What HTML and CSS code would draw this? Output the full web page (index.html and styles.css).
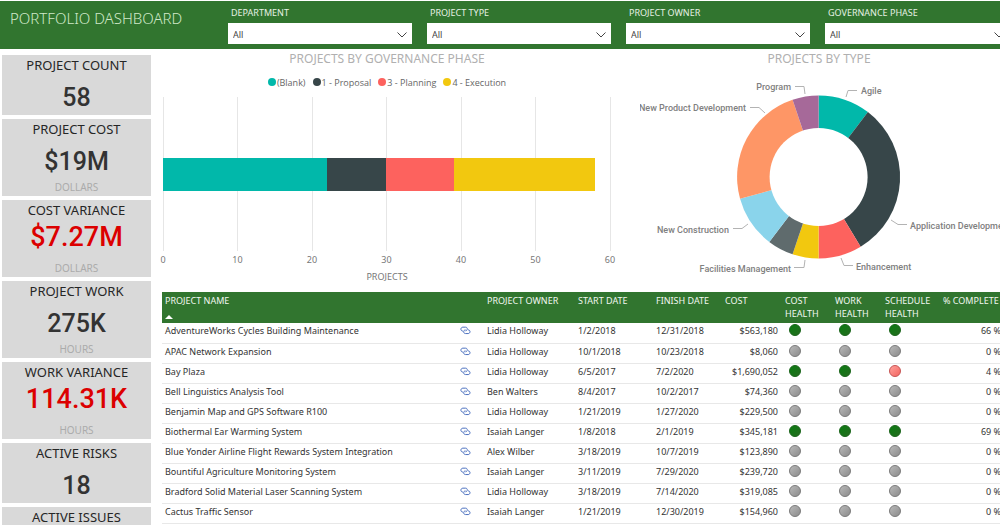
FILE: index.html
```html
<!DOCTYPE html>
<html lang="en">
<head>
<meta charset="utf-8">
<title>Portfolio Dashboard</title>
<link rel="stylesheet" href="styles.css">
</head>
<body>
<svg class="defs" aria-hidden="true">
  <symbol id="link" viewBox="0 0 12 10">
    <g fill="none" stroke="#4a6fbe" stroke-width="1.1">
      <path d="M3.3 5.7C1.6 5.7.9 4.6.9 3.5S1.7 1.3 3.1 1.3H6C7.4 1.3 8 2.2 8 3.2S7.3 5.4 6 5.4"/>
      <path d="M8.8 4.3C10.4 4.3 11 5.300 11 6.300S10.300 8.400 9 8.400H6C4.600 8.400 4 7.500 4 6.400S4.700 4.300 6 4.300"/>
    </g>
  </symbol>
  <symbol id="chevron" viewBox="0 0 10 6"><path d="M.5.5 5 5 9.500.500" fill="none" stroke="#444" stroke-width="1"/></symbol>
</svg>
<header class="topbar">
  <h1 class="brand">PORTFOLIO DASHBOARD</h1>
  <div class="filter"><label for="dept">DEPARTMENT</label><div class="pick"><select id="dept"><option>All</option></select><svg><use href="#chevron"/></svg></div></div>
  <div class="filter"><label for="type">PROJECT TYPE</label><div class="pick"><select id="type"><option>All</option></select><svg><use href="#chevron"/></svg></div></div>
  <div class="filter"><label for="owner">PROJECT OWNER</label><div class="pick"><select id="owner"><option>All</option></select><svg><use href="#chevron"/></svg></div></div>
  <div class="filter"><label for="phase">GOVERNANCE PHASE</label><div class="pick"><select id="phase"><option>All</option></select><svg><use href="#chevron"/></svg></div></div>
</header>
<div class="layout">
  <aside class="cards">
    <section class="card"><h2>PROJECT COUNT</h2><p class="value">58</p></section>
    <section class="card"><h2>PROJECT COST</h2><p class="value">$19M</p><p class="unit">DOLLARS</p></section>
    <section class="card alert"><h2>COST VARIANCE</h2><p class="value">$7.27M</p><p class="unit">DOLLARS</p></section>
    <section class="card"><h2>PROJECT WORK</h2><p class="value">275K</p><p class="unit">HOURS</p></section>
    <section class="card alert"><h2>WORK VARIANCE</h2><p class="value">114.31K</p><p class="unit">HOURS</p></section>
    <section class="card"><h2>ACTIVE RISKS</h2><p class="value">18</p></section>
    <section class="card"><h2>ACTIVE ISSUES</h2><p class="value"></p></section>
  </aside>
  <main class="main">
    <div class="charts">
      <section class="phase">
        <h2 class="title">PROJECTS BY GOVERNANCE PHASE</h2>
        <ul class="legend"><li><i class="teal"></i>(Blank)</li><li><i class="slate"></i>1 - Proposal</li><li><i class="coral"></i>3 - Planning</li><li><i class="gold"></i>4 - Execution</li></ul>
        <div class="plot">
          <div class="stack"><span class="teal" style="width:36.67%"></span><span class="slate" style="width:13.33%"></span><span class="coral" style="width:15%"></span><span class="gold" style="width:31.67%"></span></div>
        </div>
        <div class="axis"><span>0</span><span>10</span><span>20</span><span>30</span><span>40</span><span>50</span><span>60</span></div>
        <p class="axis-title">PROJECTS</p>
      </section>
      <section class="types">
        <h2 class="title">PROJECTS BY TYPE</h2>
        <svg class="donut" viewBox="640 69 400 220" role="img" aria-label="Projects by type">
          <g transform="translate(818.6 177)">
            <path fill="#01b8aa" d="M0 0V-81.500A81.500 81.500 0 0 1 49.320-64.880Z"/>
            <path fill="#374649" d="M0 0 49.320-64.880A81.500 81.500 0 0 1 42.020 69.830Z"/>
            <path fill="#fd625e" d="M0 0 42.020 69.830A81.500 81.500 0 0 1 0 81.500Z"/>
            <path fill="#f2c80f" d="M0 0V81.500A81.500 81.500 0 0 1-26.020 77.230Z"/>
            <path fill="#5f6b6d" d="M0 0-26.020 77.230A81.500 81.500 0 0 1-49.320 64.880Z"/>
            <path fill="#8ad4eb" d="M0 0-49.320 64.880A81.500 81.500 0 0 1-78.540 21.780Z"/>
            <path fill="#fe9666" d="M0 0-78.540 21.780A81.500 81.500 0 0 1-26.020-77.230Z"/>
            <path fill="#a66999" d="M0 0-26.020-77.230A81.500 81.500 0 0 1 0-81.500Z"/>
            <circle r="49" fill="#fff"/>
          </g>
          <g fill="none" stroke="#b3b3b3" stroke-width="1">
            <path d="M795 86.500H804L805 94M846 97 848 90.500H857M750 107.500H759L765 113M891 220 898 224.500H907M733 228.500H742L748 224M794 267.500H804L805 260M841 258 844 265.500H853"/>
          </g>
          <g class="labels">
            <text x="791" y="90" text-anchor="end">Program</text>
            <text x="861" y="94">Agile</text>
            <text x="746" y="111" text-anchor="end">New Product Development</text>
            <text x="910" y="229">Application Development</text>
            <text x="729" y="233" text-anchor="end">New Construction</text>
            <text x="791" y="272" text-anchor="end">Facilities Management</text>
            <text x="856" y="270">Enhancement</text>
          </g>
        </svg>
      </section>
    </div>
    <table class="projects">
      <colgroup><col><col class="c-link"><col class="c-owner"><col class="c-start"><col class="c-finish"><col class="c-cost"><col class="c-health"><col class="c-health"><col class="c-sched"><col class="c-done"></colgroup>
      <thead><tr><th>PROJECT NAME<span class="sort"></span></th><th></th><th>PROJECT OWNER</th><th>START DATE</th><th>FINISH DATE</th><th>COST</th><th>COST HEALTH</th><th>WORK HEALTH</th><th>SCHEDULE HEALTH</th><th>% COMPLETE</th></tr></thead>
      <tbody>
        <tr><td>AdventureWorks Cycles Building Maintenance</td><td><a href="#" aria-label="Open project"><svg><use href="#link"/></svg></a></td><td>Lidia Holloway</td><td>1/2/2018</td><td>12/31/2018</td><td class="num">$563,180</td><td><i class="dot good"></i></td><td><i class="dot good"></i></td><td><i class="dot good"></i></td><td class="num">66 %</td></tr>
        <tr><td>APAC Network Expansion</td><td><a href="#" aria-label="Open project"><svg><use href="#link"/></svg></a></td><td>Lidia Holloway</td><td>10/1/2018</td><td>10/23/2018</td><td class="num">$8,060</td><td><i class="dot"></i></td><td><i class="dot"></i></td><td><i class="dot"></i></td><td class="num">0 %</td></tr>
        <tr><td>Bay Plaza</td><td><a href="#" aria-label="Open project"><svg><use href="#link"/></svg></a></td><td>Lidia Holloway</td><td>6/5/2017</td><td>7/2/2020</td><td class="num">$1,690,052</td><td><i class="dot good"></i></td><td><i class="dot good"></i></td><td><i class="dot bad"></i></td><td class="num">4 %</td></tr>
        <tr><td>Bell Linguistics Analysis Tool</td><td><a href="#" aria-label="Open project"><svg><use href="#link"/></svg></a></td><td>Ben Walters</td><td>8/4/2017</td><td>10/2/2017</td><td class="num">$74,360</td><td><i class="dot"></i></td><td><i class="dot"></i></td><td><i class="dot"></i></td><td class="num">0 %</td></tr>
        <tr><td>Benjamin Map and GPS Software R100</td><td><a href="#" aria-label="Open project"><svg><use href="#link"/></svg></a></td><td>Lidia Holloway</td><td>1/21/2019</td><td>1/27/2020</td><td class="num">$229,500</td><td><i class="dot"></i></td><td><i class="dot"></i></td><td><i class="dot"></i></td><td class="num">0 %</td></tr>
        <tr><td>Biothermal Ear Warming System</td><td><a href="#" aria-label="Open project"><svg><use href="#link"/></svg></a></td><td>Isaiah Langer</td><td>1/8/2018</td><td>2/1/2019</td><td class="num">$345,181</td><td><i class="dot good"></i></td><td><i class="dot good"></i></td><td><i class="dot good"></i></td><td class="num">69 %</td></tr>
        <tr><td>Blue Yonder Airline Flight Rewards System Integration</td><td><a href="#" aria-label="Open project"><svg><use href="#link"/></svg></a></td><td>Alex Wilber</td><td>3/18/2019</td><td>10/7/2019</td><td class="num">$123,890</td><td><i class="dot"></i></td><td><i class="dot"></i></td><td><i class="dot"></i></td><td class="num">0 %</td></tr>
        <tr><td>Bountiful Agriculture Monitoring System</td><td><a href="#" aria-label="Open project"><svg><use href="#link"/></svg></a></td><td>Isaiah Langer</td><td>3/11/2019</td><td>7/29/2020</td><td class="num">$239,720</td><td><i class="dot"></i></td><td><i class="dot"></i></td><td><i class="dot"></i></td><td class="num">0 %</td></tr>
        <tr><td>Bradford Solid Material Laser Scanning System</td><td><a href="#" aria-label="Open project"><svg><use href="#link"/></svg></a></td><td>Lidia Holloway</td><td>3/18/2019</td><td>7/14/2020</td><td class="num">$319,085</td><td><i class="dot"></i></td><td><i class="dot"></i></td><td><i class="dot"></i></td><td class="num">0 %</td></tr>
        <tr><td>Cactus Traffic Sensor</td><td><a href="#" aria-label="Open project"><svg><use href="#link"/></svg></a></td><td>Isaiah Langer</td><td>1/21/2019</td><td>12/30/2019</td><td class="num">$154,960</td><td><i class="dot"></i></td><td><i class="dot"></i></td><td><i class="dot"></i></td><td class="num">0 %</td></tr>
        <tr><td></td><td></td><td></td><td></td><td></td><td></td><td><i class="dot"></i></td><td><i class="dot"></i></td><td><i class="dot"></i></td><td></td></tr>
      </tbody>
    </table>
  </main>
</div>
</body>
</html>
```
FILE: styles.css
```css
* { box-sizing: border-box; margin: 0; padding: 0; }
body {
  height: 100vh;
  overflow: hidden;
  padding-top: 1px;
  background: #fff;
  color: #333;
  font-family: "Noto Sans", "Open Sans", sans-serif;
  font-size: 9px;
}
.defs { position: absolute; width: 0; height: 0; }

.topbar {
  display: grid;
  grid-template-columns: 213px repeat(4, minmax(184px, 1fr));
  column-gap: 15px;
  height: 48px;
  background: #31752f;
  color: #e6f1e4;
}
.brand { padding: 7px 0 0 10px; font-size: 15px; line-height: 20px; font-weight: 300; white-space: nowrap; color: #cfe8c8; }
.filter label { display: block; padding: 5px 0 0 3px; height: 22px; line-height: 14px; }
.pick { position: relative; }
.pick select {
  display: block;
  width: 100%;
  height: 21px;
  padding: 2px 5px 0;
  border: 0;
  border-radius: 0;
  appearance: none;
  background: #fff;
  color: #444;
  font: inherit;
}
.pick svg { position: absolute; right: 5px; top: 9px; width: 10px; height: 6px; pointer-events: none; }

.layout { display: grid; grid-template-columns: 149px minmax(0, 1fr); column-gap: 11px; padding-left: 2px; }
.cards { display: flex; flex-direction: column; gap: 4px; padding-top: 6px; }
.card { height: 77px; background: #d9d9d9; text-align: center; }
.card:not(:has(.unit)) { height: 60px; }
.card h2 { height: 20px; line-height: 20px; font-size: 13px; font-weight: 400; color: #262626; }
.card .value { height: 42px; line-height: 46px; font-family: Roboto, sans-serif; font-size: 25px; font-weight: 500; }
.card.alert .value { line-height: 34px; font-size: 27px; color: #dc0000; }
.card .unit { line-height: 12px; font-size: 10px; color: #ababab; }

.charts { display: grid; grid-template-columns: minmax(0, 450fr) minmax(0, 360fr); column-gap: 28px; height: 243px; }
.title { font-size: 12px; line-height: 20px; font-weight: 400; color: #b0b0b0; text-align: center; }
.legend { display: flex; justify-content: center; gap: 7px; list-style: none; height: 28px; font-family: "Open Sans", sans-serif; color: #666; }
.legend li { display: flex; align-items: center; height: 26px; gap: 1px; }
.legend i { width: 8px; height: 8px; border-radius: 50%; }
.teal { background: #01b8aa; }
.slate { background: #374649; }
.coral { background: #fd625e; }
.gold { background: #f2c80f; }
.plot {
  height: 154px;
  margin: 0 1px;
  padding-top: 61px;
  border-right: 1px solid #e6e6e6;
  background: repeating-linear-gradient(90deg, #e6e6e6 0 1px, transparent 1px calc(100% / 6));
}
.stack { display: flex; height: 33px; }
.axis { display: flex; justify-content: space-between; margin: 0 -8px 0 -9px; line-height: 18px; color: #777; }
.axis span { width: 20px; text-align: center; }
.axis-title { text-align: center; line-height: 15px; color: #777; }
.types { min-width: 0; }
.types .title { width: 358px; }
.donut { display: block; width: 400px; height: 220px; }
.labels { font-family: Roboto, sans-serif; font-size: 9px; font-weight: 500; fill: #808080; }

.projects { width: calc(100% + 4px); table-layout: fixed; border-collapse: collapse; }
.c-link { width: 27px; }
.c-owner { width: 91px; }
.c-start { width: 78px; }
.c-finish { width: 69px; }
.c-cost { width: 60px; }
.c-health { width: 50px; }
.c-sched { width: 58px; }
.c-done { width: 64px; }
.projects th { height: 31px; padding: 2px 4px 0 3px; background: #31752f; color: #f2f7f1; font-weight: 400; line-height: 13px; text-align: left; vertical-align: top; }
.projects td { height: 20px; padding: 0 4px 0 3px; border-bottom: 1px solid #e8e8e8; line-height: 16px; vertical-align: top; white-space: nowrap; }
.projects .num { text-align: right; }
.projects td:last-child { padding-right: 3px; }
.projects td a { display: block; }
.projects td svg { display: block; width: 11px; height: 9px; margin-top: 3px; }
.sort { display: block; width: 8px; margin-top: 8px; border: 4px solid transparent; border-top: 0; border-bottom-color: #fff; }
.dot { display: block; width: 12px; height: 12px; margin: 1px 0 0 4px; border: 1px solid #7c7c7c; border-radius: 50%; background: linear-gradient(135deg, #b8b8b8, #8c8c8c); }
.dot.good { border-color: #1c661c; background: linear-gradient(135deg, #0b7d12, #256b1f); }
.dot.bad { border-color: #c65656; background: linear-gradient(135deg, #ffa09b, #f36560); }
```
